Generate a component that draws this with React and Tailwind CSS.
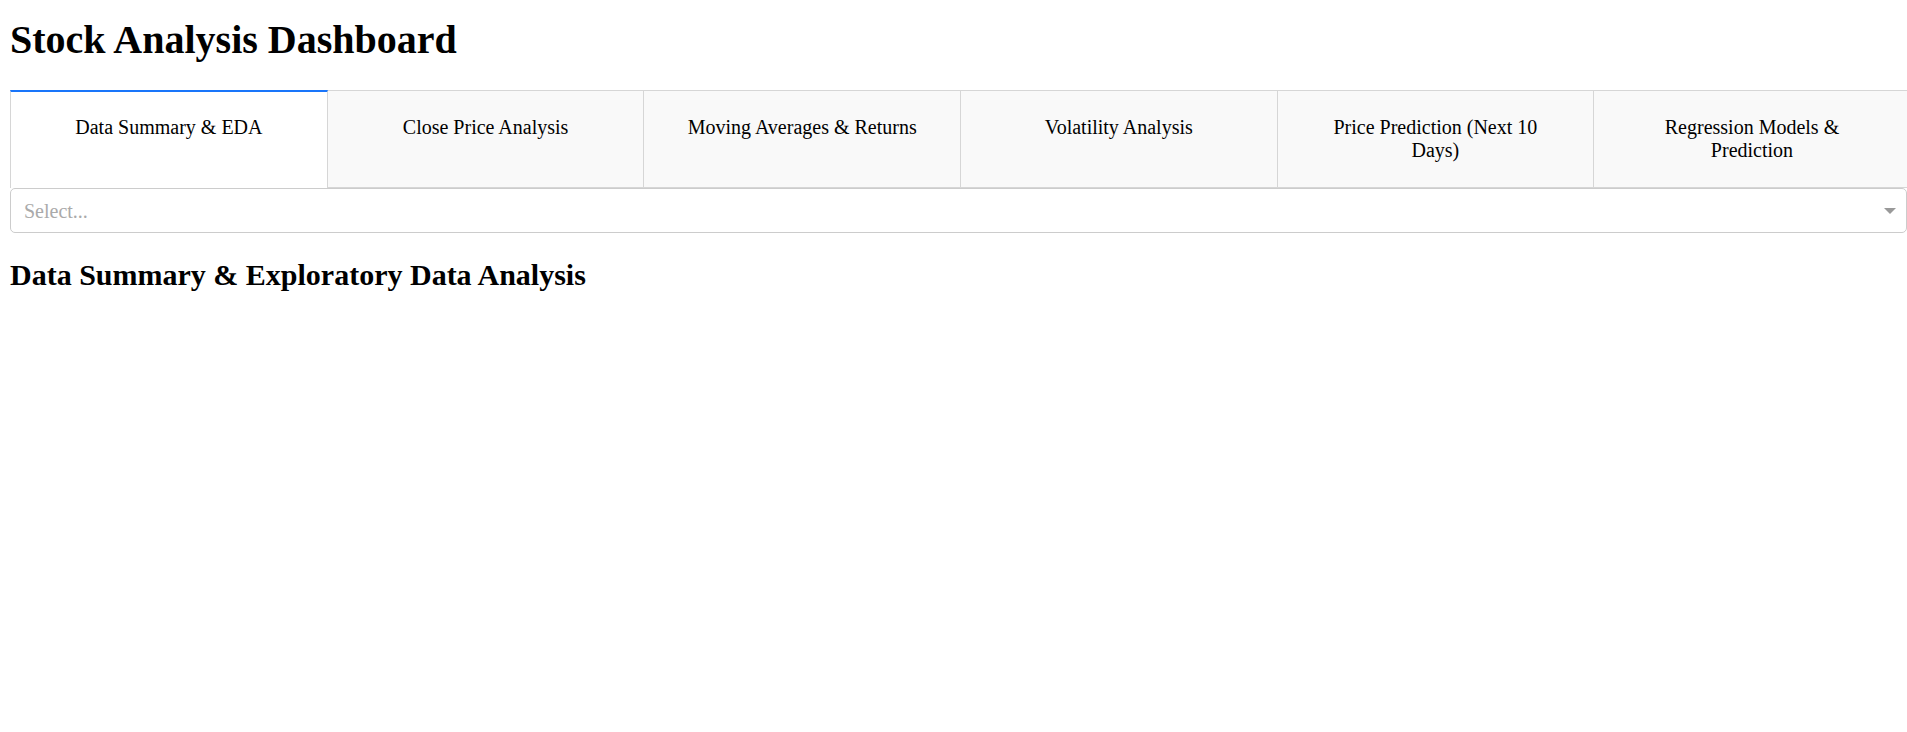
import React, { useState } from 'react';

const TABS = [
    'Data Summary & EDA',
    'Close Price Analysis',
    'Moving Averages & Returns',
    'Volatility Analysis',
    'Price Prediction (Next 10 Days)',
    'Regression Models & Prediction',
];

const HEADINGS = [
    'Data Summary & Exploratory Data Analysis',
    'Close Price Analysis',
    'Moving Averages & Returns',
    'Volatility Analysis',
    'Price Prediction (Next 10 Days)',
    'Regression Models & Prediction',
];

function App() {
    const [active, setActive] = useState(0);

    return (
        <div
            className="min-h-screen w-full overflow-hidden bg-white text-black pl-[10px] pt-[17px]"
            style={{ fontFamily: '"Liberation Serif", "Times New Roman", serif' }}
        >
            <h1 className="text-[40px] font-bold leading-[46px] mb-[27px]">Stock Analysis Dashboard</h1>

            {/* Tabs */}
            <div className="flex">
                {TABS.map((label, i) => (
                    <div
                        key={label}
                        onClick={() => setActive(i)}
                        className={
                            (i === 0 ? 'w-[317.8px] ' : 'w-[316.6px] ') +
                            (i === active
                                ? 'shrink-0 cursor-pointer bg-white border-x border-[#d6d6d6] border-t-2 border-t-[#1975FA] px-[31px] pt-[24px] pb-[26px] text-center text-[20px] leading-[23px] min-h-[97px]'
                                : 'shrink-0 cursor-pointer bg-[#f9f9f9] border border-[#d6d6d6] border-l-0 px-[31px] pt-[25px] pb-[25px] text-center text-[20px] leading-[23px] min-h-[97px]')
                        }
                    >
                        {label}
                    </div>
                ))}
            </div>

            {/* Dropdown */}
            <div className="w-[1897px] h-[45px] flex items-center justify-between border border-[#cccccc] rounded-[5px] bg-white pl-[13px] pr-[10px]">
                <span className="text-[20px] text-[#aaaaaa]">Select...</span>
                <span className="w-0 h-0 border-x-[6px] border-t-[6px] border-x-transparent border-t-[#999999]"></span>
            </div>

            <h2 className="text-[30px] font-bold leading-[35px] mt-[24px]">{HEADINGS[active]}</h2>
        </div>
    );
}

export default App;
